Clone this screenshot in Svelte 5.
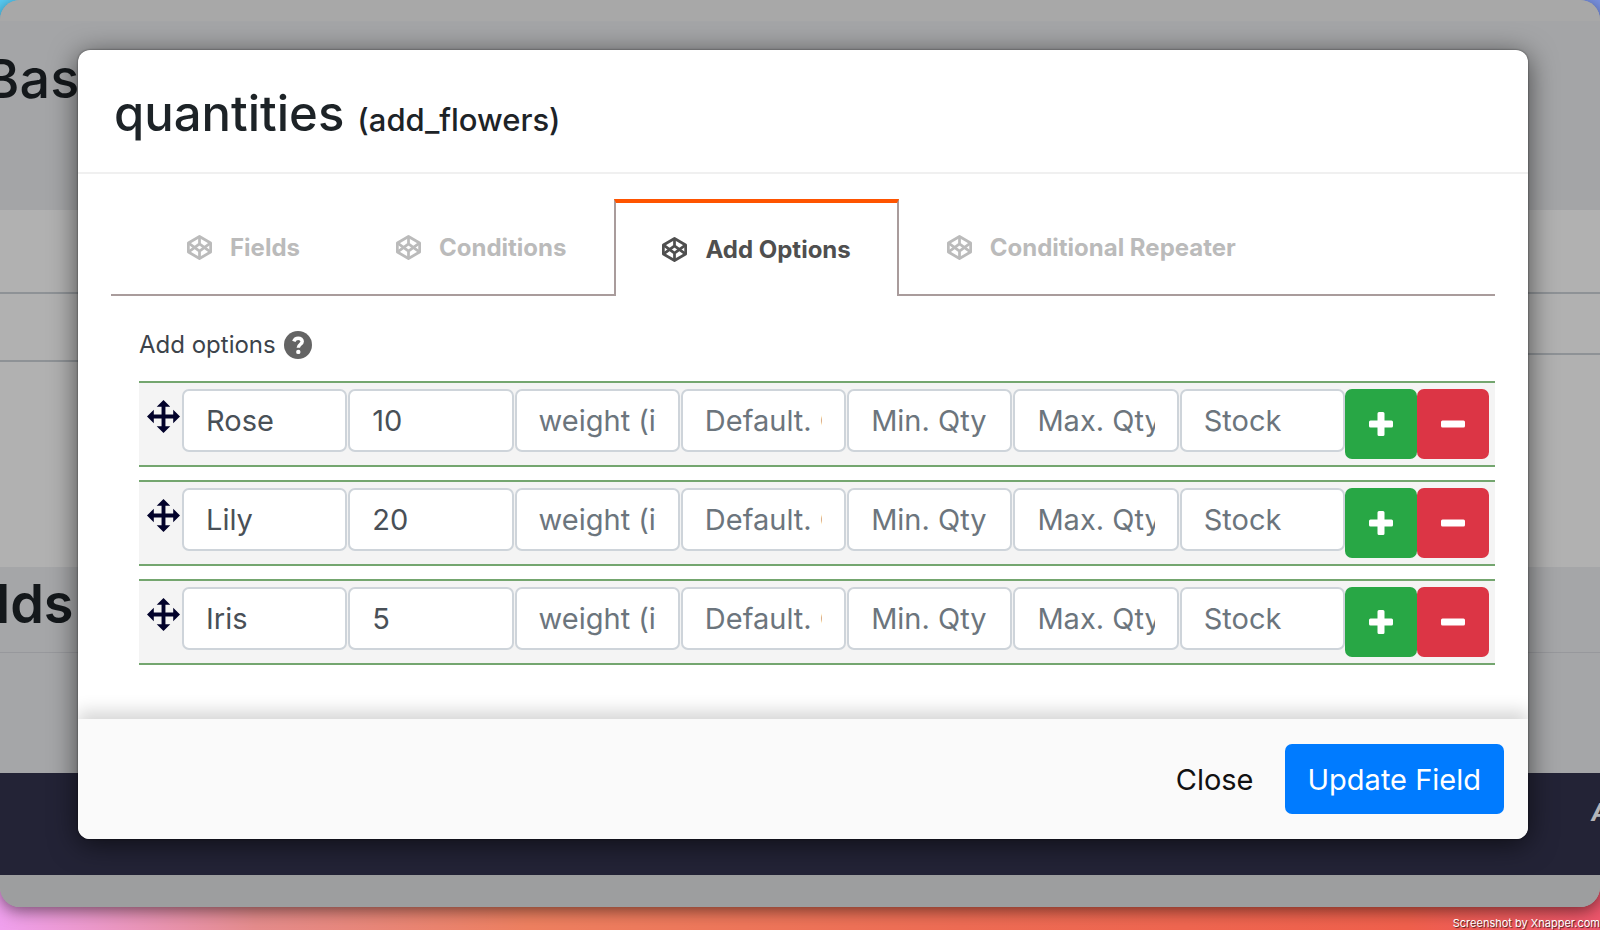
<script>
  let tabs = ['Fields', 'Conditions', 'Add Options', 'Conditional Repeater'];
  let active = 'Add Options';
  let options = [
    { label: 'Rose', price: '10' },
    { label: 'Lily', price: '20' },
    { label: 'Iris', price: '5' },
  ];
  const extras = ['weight (if-any)', 'Default. Qty', 'Min. Qty', 'Max. Qty', 'Stock'];

  function addOption(i) {
    options.splice(i + 1, 0, { label: '', price: '' });
    options = options;
  }
  function removeOption(i) {
    if (options.length > 1) options = options.filter((_, n) => n !== i);
  }
</script>

<div class="desktop">
  <div class="page" aria-hidden="true">
    <div class="strip"></div>
    <div class="intro"><h2>Bas</h2></div>
    <div class="table">
      <div class="col left"></div>
      <div class="col right"></div>
    </div>
    <div class="fields"><h2>lds</h2></div>
    <div class="bar"><span>A</span></div>
    <div class="end"></div>
  </div>
  <div class="credit">Screenshot by Xnapper.com</div>

  <div class="modal" role="dialog" aria-labelledby="modal-title">
    <header>
      <h1 id="modal-title">quantities <small>(add_flowers)</small></h1>
    </header>

    <div class="body">
      <div class="tabs" role="tablist">
        {#each tabs as tab}
          <button
            class="tab"
            class:active={tab === active}
            role="tab"
            aria-selected={tab === active}
            on:click={() => (active = tab)}
          >
            <svg viewBox="1 1 22 22" aria-hidden="true">
              <path d="M12 2.300 21.800 8V16L12 21.700 2.200 16V8Z" />
              <path d="M12 21.700V15.200M21.800 8 12 15.200 2.200 8M2.200 16 12 8.800 21.800 16M12 2.300V8.800" />
            </svg>
            {tab}
          </button>
        {/each}
      </div>

      <div class="options">
        <div class="caption">
          Add options
          <svg viewBox="0 0 28 28" role="img" aria-label="Help">
            <circle cx="14" cy="14" r="14" fill="#646464" />
            <path d="M9.800 10.300C10.500 8.400 12 7.200 14.200 7.200C16.600 7.200 18.200 8.600 18.200 10.600C18.200 13.300 14.300 13.300 14.300 16.800" fill="none" stroke="#fff" stroke-width="3.500" />
            <circle cx="14.300" cy="20.900" r="2.200" fill="#fff" />
          </svg>
        </div>

        {#each options as option, i}
          <div class="row">
            <svg class="move" viewBox="0 0 34 34" aria-hidden="true">
              <path d="M17 0 24 7H19V15H27V10L34 17 27 24V19H19V27H24L17 34 10 27H15V19H7V24L0 17 7 10V15H15V7H10Z" />
            </svg>
            <div class="inputs">
              <input type="text" aria-label="Label" placeholder="Label" bind:value={option.label} />
              <input type="text" aria-label="Price" placeholder="Price" bind:value={option.price} />
              {#each extras as extra}
                <input type="text" aria-label={extra} placeholder={extra} />
              {/each}
            </div>
            <button class="square add" aria-label="Add option" on:click={() => addOption(i)}>
              <svg viewBox="0 0 24 24"><path d="M10 0H14Q15.500 0 15.500 1.500V8.500H22.500Q24 8.500 24 10V14Q24 15.500 22.500 15.500H15.500V22.500Q15.500 24 14 24H10Q8.500 24 8.500 22.500V15.500H1.500Q0 15.500 0 14V10Q0 8.500 1.500 8.500H8.500V1.500Q8.500 0 10 0Z" /></svg>
            </button>
            <button class="square remove" aria-label="Remove option" on:click={() => removeOption(i)}>
              <svg viewBox="0 0 24 24"><rect y="8.500" width="24" height="7" rx="1.500" /></svg>
            </button>
          </div>
        {/each}
      </div>
    </div>

    <footer>
      <button class="close">Close</button>
      <button class="update">Update Field</button>
    </footer>
  </div>
</div>

<style>
  :global(body) {
    margin: 0;
  }
  .desktop {
    display: grid;
    grid-template-rows: auto 23px;
    overflow: hidden;
    font-family: Inter, 'Liberation Sans', sans-serif;
    background:
      linear-gradient(90deg, #f0a0ee, #e58c8c 16%, #ee8060 33%, #ee6c54 60%, #f0604c 88%, #ee566c) bottom / 100% 60px no-repeat,
      linear-gradient(90deg, #59cdf6, #7a92e2);
  }
  h1,
  h2 {
    margin: 0;
    color: #1d2327;
    font-weight: 500;
  }
  button,
  input {
    box-sizing: border-box;
    font-family: inherit;
  }
  button {
    cursor: pointer;
  }

  /* dimmed page behind the dialog */
  .page {
    grid-area: 1 / 1;
    overflow: hidden;
    border-radius: 20px;
    background: #a5a6a8;
    box-shadow: 0 4px 16px rgba(0, 0, 0, 0.5);
  }
  .page h2 {
    color: #14181b;
    font-size: 54px;
    line-height: 60px;
  }
  .strip {
    height: 21px;
    background: #a8a8a8;
  }
  .intro {
    height: 161px;
    padding-top: 28px;
    background: #a4a5a7;
  }
  .intro h2 {
    margin-left: -16px;
  }
  .table {
    display: flex;
    justify-content: space-between;
    height: 357px;
    background: #b1b1b1;
  }
  .col {
    width: 50%;
    margin-top: 82px;
    border: solid #8e9296;
    border-width: 2px 0;
  }
  .left {
    height: 66px;
  }
  .right {
    height: 59px;
  }
  .fields {
    height: 206px;
  }
  .fields h2 {
    padding: 7px 0 18px;
    border-bottom: 1px solid #97989c;
    font-weight: 600;
    text-indent: -4px;
  }
  .bar {
    display: flex;
    justify-content: flex-end;
    height: 76px;
    padding-top: 26px;
    color: #b4b4b8;
    background: #232336;
  }
  .bar span {
    width: 9px;
    font-size: 24px;
    font-style: italic;
    font-weight: 700;
    line-height: 28px;
  }
  .end {
    height: 32px;
    background: #9d9e9f;
  }
  .credit {
    grid-area: 2 / 1;
    align-self: end;
    z-index: 1;
    color: #fff;
    font-size: 11px;
    line-height: 14px;
    text-align: right;
    text-shadow: 1px 1px 1px rgba(0, 0, 0, 0.7);
  }

  .modal {
    grid-area: 1 / 1;
    align-self: start;
    z-index: 1;
    margin: 50px 72px 0 78px;
    overflow: hidden;
    border-radius: 12px;
    background: #fff;
    box-shadow:
      0 0 2px rgba(0, 0, 0, 0.6),
      0 5px 28px rgba(0, 0, 0, 0.6);
  }
  header {
    padding: 34px 36px 28px;
    border-bottom: 2px solid #f0f0f0;
  }
  h1 {
    font-size: 49px;
    line-height: 60px;
  }
  small {
    font-size: 31px;
    line-height: 1;
  }
  .body {
    padding: 25px 33px 54px;
  }

  .tabs {
    display: flex;
    height: 97px;
    padding-left: 28px;
    background: linear-gradient(#a99c9c, #a99c9c) bottom / 100% 2px no-repeat;
  }
  .tab {
    display: flex;
    align-items: center;
    gap: 18px;
    padding: 0 48px;
    border: 0;
    background: none;
    color: #bbb;
    font-size: 24px;
    font-weight: 700;
    white-space: nowrap;
  }
  .tab.active {
    padding: 0 46px;
    border: 2px solid #a99c9c;
    border-top: 4px solid #ff5400;
    border-bottom: 0;
    background: #fff;
    color: #4f4f4f;
  }
  .tab svg {
    width: 25px;
    height: 25px;
    fill: none;
    stroke: currentColor;
    stroke-width: 2.4;
    stroke-linejoin: round;
  }

  .options {
    display: flex;
    flex-direction: column;
    gap: 13px;
    padding-left: 28px;
  }
  .caption {
    display: flex;
    align-items: center;
    gap: 8px;
    padding: 35px 0 9px;
    color: #3c434a;
    font-size: 24px;
    line-height: 28px;
  }
  .caption svg {
    width: 28px;
    height: 28px;
  }
  .row {
    display: flex;
    align-items: flex-start;
    padding: 6px 6px 6px 8px;
    border: solid #74a66f;
    border-width: 2px 0;
    background: #f4f4f4;
  }
  .move {
    flex: none;
    width: 33px;
    height: 33px;
    margin: 11px 2px 0 0;
    fill: #02022b;
  }
  .inputs {
    display: flex;
    flex: 1;
    gap: 1px;
    min-width: 0;
  }
  input {
    flex: 1;
    min-width: 0;
    height: 63px;
    padding: 0 22px;
    border: 2px solid #ced4da;
    border-radius: 7px;
    background: #fff;
    color: #495057;
    font-size: 29px;
  }
  input::placeholder {
    color: #6c757d;
    opacity: 1;
  }
  .square {
    display: flex;
    align-items: center;
    justify-content: center;
    width: 72px;
    height: 70px;
    padding: 0;
    border: 0;
    border-radius: 7px;
    background: #28a745;
  }
  .remove {
    background: #dc3545;
  }
  .square svg {
    width: 24px;
    height: 24px;
    fill: #fff;
  }

  footer {
    display: flex;
    justify-content: flex-end;
    gap: 8px;
    padding: 25px 24px;
    background: #fafafa;
    box-shadow: 0 -8px 16px rgba(0, 0, 0, 0.16);
  }
  footer button {
    height: 70px;
    padding: 0 23px;
    border: 0;
    border-radius: 7px;
    background: none;
    color: #111;
    font-size: 29px;
  }
  footer .update {
    background: #007bff;
    color: #fff;
  }
</style>
